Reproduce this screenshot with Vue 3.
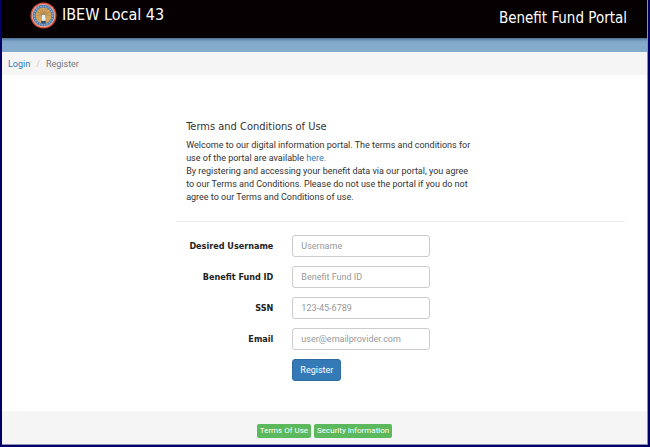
<template>
    <div class="portal">
        <header class="top-bar">
            <div class="brand">
                <!-- Union seal -->
                <svg class="seal" width="27" height="27" viewBox="0 0 54 54" aria-hidden="true">
                    <circle cx="27" cy="27" r="26" fill="#d9503f" />
                    <circle cx="27" cy="27" r="23" fill="#f3b8a0" />
                    <circle cx="27" cy="27" r="21.500" fill="#3f74ad" />
                    <circle cx="27" cy="27" r="18.500" fill="none" stroke="#8fb0cf" stroke-width="3" stroke-dasharray="3 2" />
                    <circle cx="27" cy="27" r="16" fill="#d2a35a" />
                    <path
                        d="M27 25L14 20M27 25L17 14M27 25L23 13M27 25L31 13M27 25L37 14M27 25L40 20M27 25L41 27M27 25L13 27"
                        stroke="#b08448"
                        stroke-width="1.500"
                    />
                    <path d="M22 25q5-6 10 0l-1 5h-8z" fill="#a98d64" />
                    <path d="M24 26h6l1 11h-7z" fill="#e9f1f8" />
                    <path d="M22 38h10l-1 5h-8z" fill="#294f86" />
                </svg>
                <span>IBEW Local 43</span>
            </div>
            <div class="portal-name">Benefit Fund Portal</div>
        </header>
        <div class="strip"></div>

        <nav class="breadcrumb" aria-label="Breadcrumb">
            <a href="#login">Login</a>
            <span class="divider">/</span>
            <span class="current">Register</span>
        </nav>

        <main class="content">
            <section class="terms">
                <h1>Terms and Conditions of Use</h1>
                <p>
                    Welcome to our digital information portal. The terms and conditions for<br />
                    use of the portal are available <a href="#terms">here.</a>
                </p>
                <p>
                    By registering and accessing your benefit data via our portal, you agree<br />
                    to our Terms and Conditions. Please do not use the portal if you do not<br />
                    agree to our Terms and Conditions of use.
                </p>
            </section>

            <hr />

            <form class="register-form" @submit.prevent>
                <div v-for="field in fields" :key="field.id" class="form-row">
                    <label :for="field.id">{{ field.label }}</label>
                    <input :id="field.id" v-model="form[field.id]" :type="field.type" :placeholder="field.placeholder" />
                </div>
                <div class="form-row">
                    <button type="submit">Register</button>
                </div>
            </form>
        </main>

        <footer class="footer">
            <a class="tag" href="#terms">Terms Of Use</a>
            <a class="tag" href="#security">Security Information</a>
        </footer>
    </div>
</template>

<script setup>
import { reactive } from 'vue'

const fields = [
    { id: 'username', label: 'Desired Username', type: 'text', placeholder: 'Username' },
    { id: 'fundId', label: 'Benefit Fund ID', type: 'text', placeholder: 'Benefit Fund ID' },
    { id: 'ssn', label: 'SSN', type: 'text', placeholder: '123-45-6789' },
    { id: 'email', label: 'Email', type: 'email', placeholder: 'user@emailprovider.com' }
]

const form = reactive({
    username: '',
    fundId: '',
    ssn: '',
    email: ''
})
</script>

<style>
body {
    margin: 0;
    background: #fff;
}
</style>

<style scoped>
.portal {
    box-sizing: border-box;
    display: flex;
    flex-direction: column;
    min-height: 100vh;
    padding: 0 1px 1px 0;
    border: 2px solid #000066;
    border-top: 0;
    background: #8e8eb4;
    color: #333;
    font-family: Tahoma, Roboto, sans-serif;
    font-size: 9px;
    line-height: 13px;
}

a {
    color: #337ab7;
    text-decoration: none;
}

/* Header */
.top-bar {
    display: flex;
    justify-content: space-between;
    height: 38px;
    padding: 0 20px 0 28px;
    background: #050001;
    color: #fff;
    font-family: Tahoma, "DejaVu Sans Condensed", sans-serif;
    font-size: 15px;
    line-height: 20px;
}

.brand {
    display: flex;
    align-items: flex-start;
    gap: 5px;
    padding-top: 2px;
    font-size: 16px;
}

.brand span {
    padding-top: 3px;
}

.portal-name {
    padding-top: 8px;
}

.strip {
    height: 14px;
    background: linear-gradient(#4c7195, #7ca3c6 3px, #85abcc 5px);
}

.breadcrumb {
    display: flex;
    gap: 6px;
    padding: 6px 6px 4px;
    background: #f5f5f5;
}

.divider {
    color: #ccc;
}

.current {
    color: #777;
}

/* Content */
.content {
    flex: 1;
    padding: 44px 22px 18px 27%;
    background: #fff;
}

.terms {
    padding-left: 10px;
}

.terms h1 {
    margin: 0 0 4px;
    font-family: Tahoma, "DejaVu Sans Condensed", sans-serif;
    font-size: 11px;
    font-weight: 400;
    line-height: 16px;
}

.terms p {
    margin: 0;
}

hr {
    margin: 17px 0 13px;
    border: 0;
    border-top: 1px solid #eee;
}

.form-row {
    display: grid;
    grid-template-columns: 97fr 137fr 176fr;
    column-gap: 19px;
    align-items: center;
    margin-bottom: 9px;
}

.form-row label {
    color: #222;
    font-family: Tahoma, "DejaVu Sans Condensed", sans-serif;
    font-weight: 700;
    text-align: right;
    white-space: nowrap;
}

.form-row input {
    box-sizing: border-box;
    width: 100%;
    height: 22px;
    padding: 0 8px;
    border: 1px solid #ccc;
    border-radius: 3px;
    background: #fff;
    color: #555;
    font: inherit;
}

.form-row input::placeholder {
    color: #999;
    opacity: 1;
}

.form-row button {
    grid-column: 2;
    justify-self: start;
    height: 22px;
    padding: 0 7px;
    border: 1px solid #2e6da4;
    border-radius: 3px;
    background: #337ab7;
    color: #fff;
    font: inherit;
}

/* Footer */
.footer {
    display: flex;
    justify-content: center;
    gap: 3px;
    padding: 13px 0 6px;
    background: #f5f5f5;
}

.tag {
    padding: 0 3px;
    border-radius: 2px;
    background: #5cb85c;
    color: #fff;
    font-size: 8px;
    line-height: 14px;
}
</style>
